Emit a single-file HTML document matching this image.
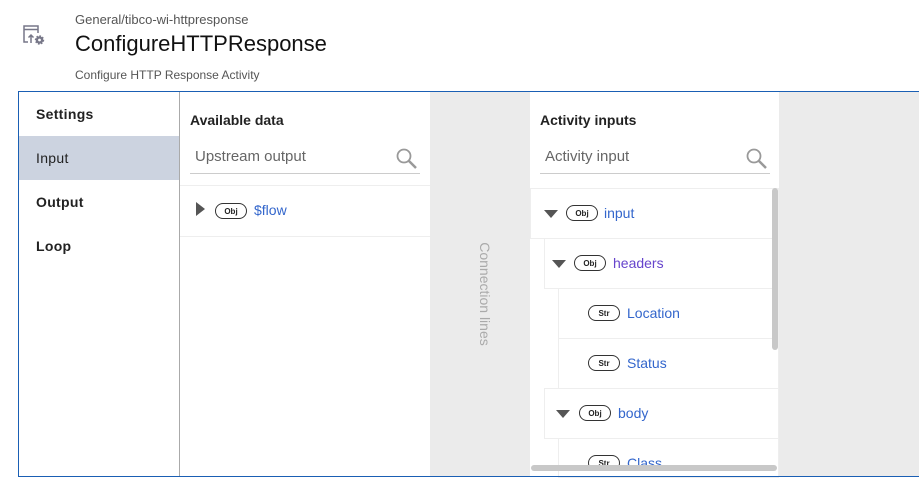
<html><head><style>
body{margin:0;width:919px;height:490px;background:#fff;font-family:"Liberation Sans",sans-serif;position:relative;overflow:hidden}
.a{position:absolute}
.pill{position:absolute;border:1px solid #333;border-radius:9px;width:30px;height:14px;font-size:8px;font-weight:bold;text-align:center;line-height:15px;color:#222}
.tri{position:absolute;width:0;height:0;border-left:7px solid transparent;border-right:7px solid transparent;border-top:8px solid #555}
.lbl{position:absolute;font-size:14px;color:#3366cc}
.row{position:absolute;border:1px solid #eee;background:#fff;box-sizing:border-box}
.nav{position:absolute;left:19px;width:160px;height:44px;font-size:14px;font-weight:bold;color:#222;line-height:44px;padding-left:17px;box-sizing:border-box;letter-spacing:.3px}
</style></head><body>
<svg class="a" style="left:22px;top:24px" width="26" height="22" viewBox="0 0 26 22"><path d="M2 13V2h14v7M2 5.5h14M2 13v5h4" fill="none" stroke="#778" stroke-width="1.5"/><path d="M9 19v-8M6.5 13.5L9 11l2.5 2.5" fill="none" stroke="#778" stroke-width="1.5"/><circle cx="17.5" cy="16" r="2.6" fill="none" stroke="#778" stroke-width="2.4"/><circle cx="17.5" cy="16" r="4" fill="none" stroke="#778" stroke-width="1.4" stroke-dasharray="1.6 1.5"/></svg>
<div class="a" style="left:75px;top:12px;font-size:13px;color:#555">General/tibco-wi-httpresponse</div>
<div class="a" style="left:75px;top:31px;font-size:22px;color:#111">ConfigureHTTPResponse</div>
<div class="a" style="left:75px;top:68px;font-size:12px;color:#555">Configure HTTP Response Activity</div>
<div class="a" style="left:18px;top:91px;width:901px;height:386px;border:1px solid #1a5fb4;border-right:none;box-sizing:border-box"></div>
<div class="a" style="left:179px;top:92px;width:1px;height:384px;background:#aaa"></div>
<div class="nav" style="top:92px">Settings</div>
<div class="nav" style="top:136px;background:#ccd3e0;font-weight:normal;color:#222">Input</div>
<div class="nav" style="top:180px">Output</div>
<div class="nav" style="top:224px">Loop</div>
<div class="a" style="left:190px;top:112px;font-size:14px;font-weight:bold;color:#222">Available data</div>
<div class="a" style="left:190px;top:145px;width:230px;height:28px;border-bottom:1px solid #ccc"><span class="a" style="left:5px;top:3px;font-size:15px;color:#666">Upstream output</span></div>
<svg class="a" style="left:396px;top:148px" width="22" height="22"><circle cx="8" cy="8" r="6.5" fill="none" stroke="#999" stroke-width="1.8"/><path d="M13 13l7 7" stroke="#999" stroke-width="2.5"/></svg>
<div class="a" style="left:180px;top:185px;width:250px;height:50px;border-top:1px solid #eee;border-bottom:1px solid #eee"></div>
<div class="a" style="left:196px;top:202px;border-top:7px solid transparent;border-bottom:7px solid transparent;border-left:9px solid #555"></div>
<div class="pill" style="left:215px;top:203px">Obj</div><div class="lbl" style="left:254px;top:202px">$flow</div>
<div class="a" style="left:430px;top:92px;width:100px;height:384px;background:#ebebeb"></div>
<div class="a" style="left:415px;top:286px;width:140px;text-align:center;transform:rotate(90deg);font-size:14px;color:#aaa">Connection lines</div>
<div class="a" style="left:779px;top:92px;width:140px;height:384px;background:#ebebeb"></div>
<div class="a" style="left:540px;top:112px;font-size:14px;font-weight:bold;color:#222">Activity inputs</div>
<div class="a" style="left:540px;top:145px;width:230px;height:28px;border-bottom:1px solid #ccc"><span class="a" style="left:5px;top:3px;font-size:15px;color:#666">Activity input</span></div>
<svg class="a" style="left:746px;top:148px" width="22" height="22"><circle cx="8" cy="8" r="6.5" fill="none" stroke="#999" stroke-width="1.8"/><path d="M13 13l7 7" stroke="#999" stroke-width="2.5"/></svg>
<div class="row" style="left:530px;top:188px;width:249px;height:51px"></div>
<div class="tri" style="left:544px;top:210px"></div><div class="pill" style="left:566px;top:205px">Obj</div><div class="lbl" style="left:604px;top:205px">input</div>
<div class="row" style="left:544px;top:238px;width:235px;height:51px"></div>
<div class="tri" style="left:552px;top:260px"></div><div class="pill" style="left:574px;top:255px">Obj</div><div class="lbl" style="left:613px;top:255px;color:#6644cc">headers</div>
<div class="row" style="left:558px;top:288px;width:221px;height:51px"></div>
<div class="pill" style="left:588px;top:305px">Str</div><div class="lbl" style="left:627px;top:305px">Location</div>
<div class="row" style="left:558px;top:338px;width:221px;height:51px"></div>
<div class="pill" style="left:588px;top:355px">Str</div><div class="lbl" style="left:627px;top:355px">Status</div>
<div class="row" style="left:544px;top:388px;width:235px;height:51px"></div>
<div class="tri" style="left:556px;top:410px"></div><div class="pill" style="left:579px;top:405px">Obj</div><div class="lbl" style="left:618px;top:405px">body</div>
<div class="row" style="left:558px;top:438px;width:221px;height:40px"></div>
<div class="pill" style="left:588px;top:455px">Str</div><div class="lbl" style="left:627px;top:455px">Class</div>
<div class="a" style="left:772px;top:188px;width:6px;height:162px;background:#c8c8c8;border-radius:3px"></div>
<div class="a" style="left:531px;top:465px;width:246px;height:6px;background:#c8c8c8;border-radius:3px"></div>
<div class="a" style="left:18px;top:476px;width:901px;height:1px;background:#1a5fb4"></div>
</body></html>
